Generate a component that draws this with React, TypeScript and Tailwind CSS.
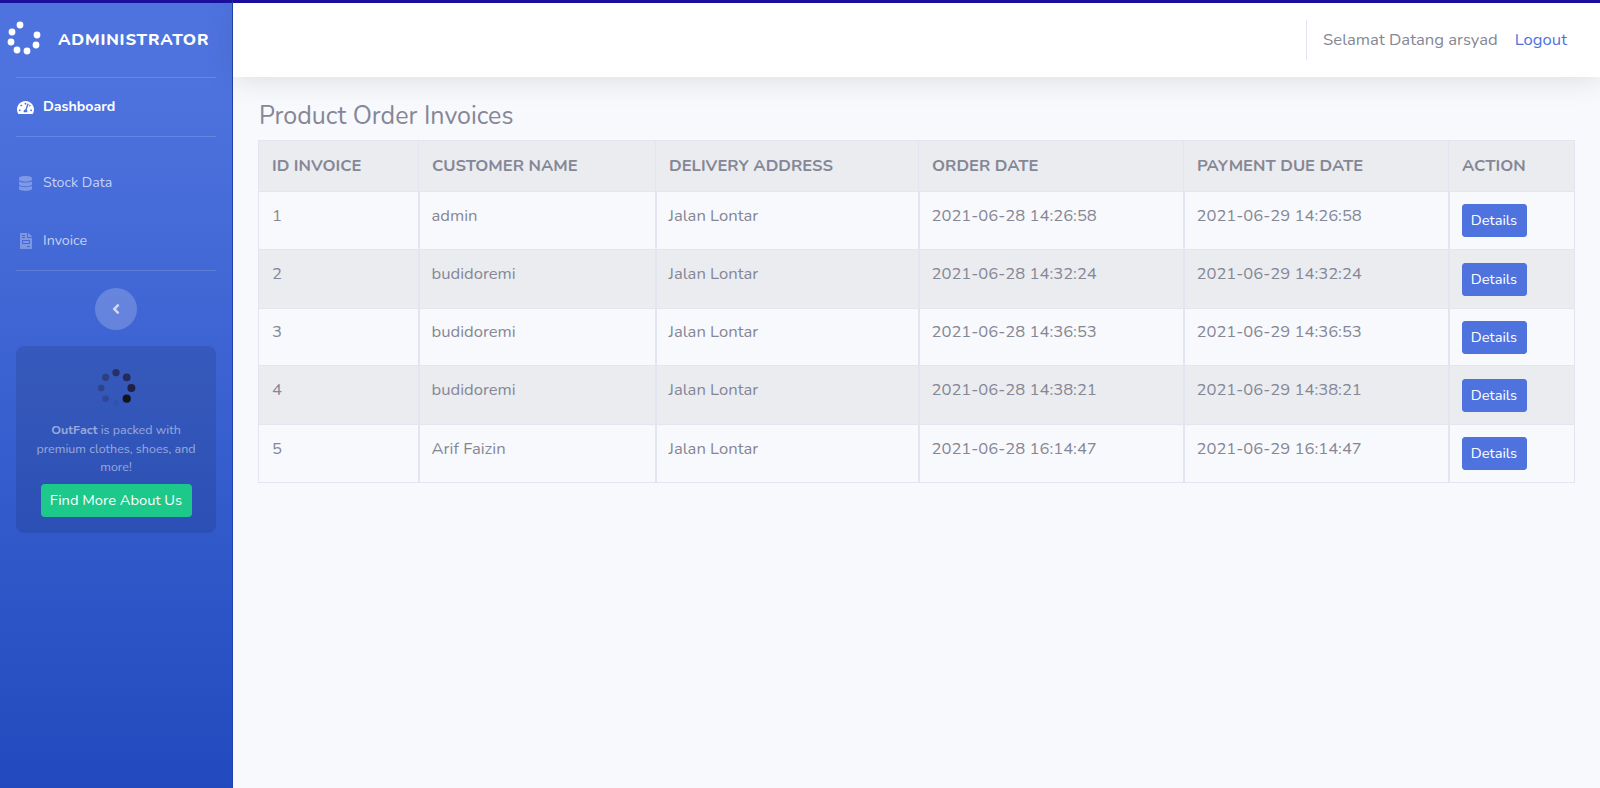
import React from "react";
import { FaTachometerAlt, FaDatabase, FaFileInvoice, FaAngleLeft } from "react-icons/fa";

type Invoice = { id: number; customer: string; address: string; ordered: string; due: string };

const invoices: Invoice[] = [
  { id: 1, customer: "admin", address: "Jalan Lontar", ordered: "2021-06-28 14:26:58", due: "2021-06-29 14:26:58" },
  { id: 2, customer: "budidoremi", address: "Jalan Lontar", ordered: "2021-06-28 14:32:24", due: "2021-06-29 14:32:24" },
  { id: 3, customer: "budidoremi", address: "Jalan Lontar", ordered: "2021-06-28 14:36:53", due: "2021-06-29 14:36:53" },
  { id: 4, customer: "budidoremi", address: "Jalan Lontar", ordered: "2021-06-28 14:38:21", due: "2021-06-29 14:38:21" },
  { id: 5, customer: "Arif Faizin", address: "Jalan Lontar", ordered: "2021-06-28 16:14:47", due: "2021-06-29 16:14:47" },
];

const headers = ["ID INVOICE", "CUSTOMER NAME", "DELIVERY ADDRESS", "ORDER DATE", "PAYMENT DUE DATE", "ACTION"];

// row heights round unevenly in the original page
const rowClasses = ["h-[58px]", "h-[59px] bg-[#eaecf0]", "h-[57px]", "h-[59px] bg-[#eaecf0]", "h-[58px]"];

function LogoDots() {
  const dots = [[20, 25], [12, 32], [11, 42], [17, 50], [27, 51], [36, 45], [37, 35]];
  return (
    <svg width="44" height="60" viewBox="0 10 44 60" className="shrink-0">
      {dots.map(([x, y]) => (
        <circle key={x + "-" + y} cx={x} cy={y} r={3.4} fill="#fff" />
      ))}
    </svg>
  );
}

function CardSpinner() {
  const dots = [
    [20, 4.6, 3.7, "#2a2f68"],
    [30.7, 9.3, 3.9, "#26295c"],
    [35.4, 20, 4, "#211f44"],
    [30.7, 30.7, 4.1, "#141318"],
    [20, 35, 3, "#3352ad"],
    [9.6, 30.7, 3.3, "#2f4795"],
    [5.2, 20, 3.3, "#2f4388"],
    [9.6, 9.3, 3.6, "#2e3f80"],
  ] as const;
  return (
    <svg width="40" height="40" viewBox="0 0 40 40" className="block">
      {dots.map(([x, y, r, c]) => (
        <circle key={x + "-" + y} cx={x} cy={y} r={r} fill={c} />
      ))}
    </svg>
  );
}

export default function App() {
  return (
    <div className="flex h-[788px] overflow-hidden bg-[#f8f9fc] font-['Nunito','Noto_Sans',sans-serif] text-[#858796]">
      {/* Sidebar */}
      <aside className="w-[233px] shrink-0 flex flex-col border-t-[3px] border-t-[#1a0f9c] border-r border-r-[#1f3fae] bg-gradient-to-b from-[#4e73df] from-10% to-[#224abe] px-4">
        <div className="h-[74px] flex items-center -ml-[16px]">
          <LogoDots />
          <span className="ml-[14px] text-[16.7px] font-extrabold tracking-[0.8px] text-white">ADMINISTRATOR</span>
        </div>
        <div className="border-t border-white/15" />
        <a className="h-[58px] flex items-center text-[14.2px] font-bold text-white">
          <FaTachometerAlt className="w-[17px] h-[17px] ml-[1px] mr-[9px]" />
          Dashboard
        </a>
        <div className="border-t border-white/15" />
        <div className="h-[15px]" />
        <a className="h-[58px] mt-[2px] flex items-center text-[14.2px] text-white/70">
          <FaDatabase className="w-[13px] h-[15px] ml-[3px] mr-[11px] text-white/30" />
          Stock Data
        </a>
        <a className="h-[58px] flex items-center text-[14.2px] text-white/70">
          <FaFileInvoice className="w-[12px] h-[16px] ml-[4px] mr-[11px] text-white/30" />
          Invoice
        </a>
        <div className="border-t border-white/15" />
        <button className="self-center mt-[17px] w-[42px] h-[42px] rounded-full bg-white/20 flex items-center justify-center text-white/70">
          <FaAngleLeft className="w-[16px] h-[16px]" />
        </button>
        <div className="mt-[16px] h-[187px] rounded-lg bg-black/10 flex flex-col items-center px-4 pt-[22px]">
          <CardSpinner />
          <p className="mt-[13px] text-center text-[12.5px] leading-[18.5px] text-white/50">
            <b className="font-bold">OutFact</b> is packed with premium clothes, shoes, and more!
          </p>
          <button className="mt-[7px] h-[33px] w-[151px] rounded-[4px] bg-[#1cc88a] text-[14.7px] text-white">Find More About Us</button>
        </div>
      </aside>

      {/* Main */}
      <div className="flex-1 min-w-0 flex flex-col">
        <header className="h-[77px] shrink-0 border-t-[3px] border-t-[#1a0f9c] bg-white shadow-[0_2.4px_28px_0_rgba(58,59,69,0.15)] flex items-center justify-end">
          <div className="h-10 border-l border-[#e3e6f0] mr-4" />
          <span className="text-[16.64px]">Selamat Datang arsyad</span>
          <a className="ml-[17px] mr-[33px] text-[16.64px] text-[#4e73df]">Logout</a>
        </header>

        <main className="flex-1 pl-[25px] pr-[25px] pt-[24px]">
          <h1 className="h-[39px] ml-px text-[25px] leading-[30px] text-[#858796]">Product Order Invoices</h1>
          <table className="w-[1316px] table-fixed border-collapse text-[16.6px]">
            <colgroup>
              <col className="w-[160px]" />
              <col className="w-[237px]" />
              <col className="w-[263px]" />
              <col className="w-[265px]" />
              <col className="w-[265px]" />
              <col className="w-[126px]" />
            </colgroup>
            <thead>
              <tr className="h-[51px] bg-[#eaecf0]">
                {headers.map((h) => (
                  <th key={h} className="border border-[#e3e6f0] px-[13px] text-left font-bold whitespace-nowrap">{h}</th>
                ))}
              </tr>
            </thead>
            <tbody>
              {invoices.map((inv, i) => (
                <tr key={inv.id} className={rowClasses[i]}>
                  <td className="border border-r-2 border-[#e3e6f0] px-[13px] pb-[9px]">{inv.id}</td>
                  <td className="border border-x-2 border-[#e3e6f0] px-[12px] pb-[9px]">{inv.customer}</td>
                  <td className="border border-x-2 border-[#e3e6f0] px-[12px] pb-[9px]">{inv.address}</td>
                  <td className="border border-x-2 border-[#e3e6f0] px-[12px] pb-[9px]">{inv.ordered}</td>
                  <td className="border border-x-2 border-[#e3e6f0] px-[12px] pb-[9px]">{inv.due}</td>
                  <td className="border border-l-2 border-[#e3e6f0] px-[12px]">
                    <button className="w-[65px] h-[33px] rounded-[3px] border border-[#4e73df] bg-[#4e73df] text-[14.7px] text-white">Details</button>
                  </td>
                </tr>
              ))}
            </tbody>
          </table>
        </main>
      </div>
    </div>
  );
}
